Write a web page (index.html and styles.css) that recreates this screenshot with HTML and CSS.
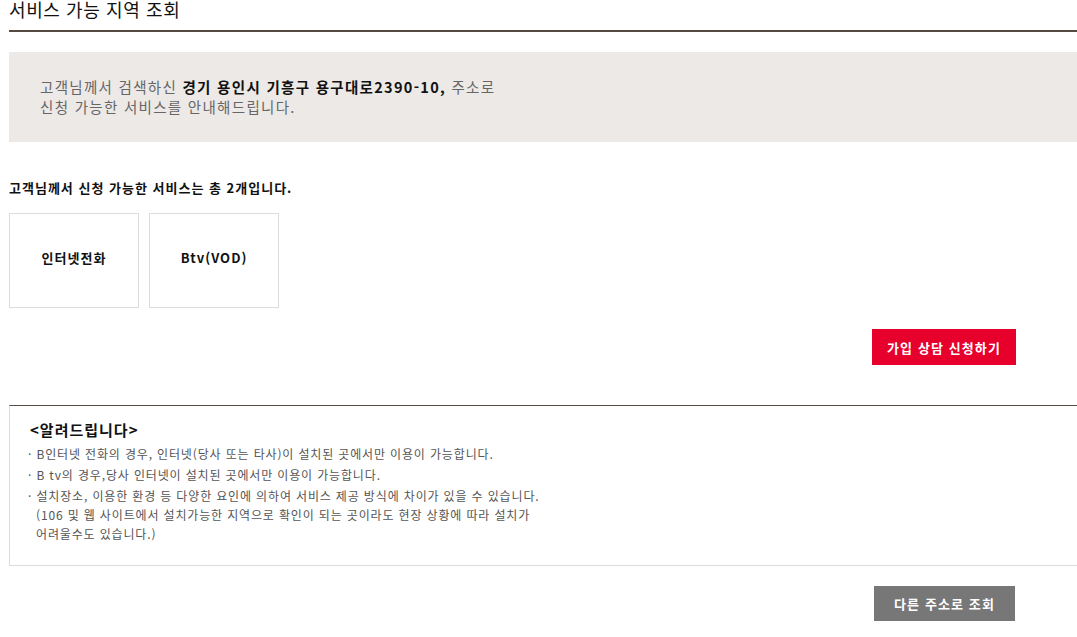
FILE: index.html
```html
<!DOCTYPE html>
<html lang="ko">

<head>
    <meta charset="UTF-8">
    <meta name="viewport" content="width=device-width, initial-scale=1.0">
    <title>서비스 가능 지역 조회</title>
    <link rel="stylesheet" href="styles.css">
</head>

<body>
    <div class="page">
        <h2 class="page-title">서비스 가능 지역 조회</h2>

        <div class="result-box">
            <p>고객님께서 검색하신 <strong>경기 용인시 기흥구 용구대로2390-10,</strong> 주소로<br>
                신청 가능한 서비스를 안내해드립니다.</p>
        </div>

        <div class="sub-title">고객님께서 신청 가능한 서비스는 총 2개입니다.</div>

        <div class="service-list">
            <div class="service-card">인터넷전화</div>
            <div class="service-card">Btv(VOD)</div>
        </div>

        <div class="btn-row">
            <button class="btn btn-red">가입 상담 신청하기</button>
        </div>

        <div class="notice">
            <div class="notice-title">&lt;알려드립니다&gt;</div>
            <ul class="notice-list">
                <li>· B인터넷 전화의 경우, 인터넷(당사 또는 타사)이 설치된 곳에서만 이용이 가능합니다.</li>
                <li>· B tv의 경우,당사 인터넷이 설치된 곳에서만 이용이 가능합니다.</li>
                <li>· 설치장소, 이용한 환경 등 다양한 요인에 의하여 서비스 제공 방식에 차이가 있을 수 있습니다.<br>
                    (106 및 웹 사이트에서 설치가능한 지역으로 확인이 되는 곳이라도 현장 상황에 따라 설치가<br>
                    어려울수도 있습니다.)</li>
            </ul>
        </div>

        <div class="btn-row btn-row-bottom">
            <button class="btn btn-gray">다른 주소로 조회</button>
        </div>
    </div>
</body>

</html>
```

FILE: styles.css
```css
html,
body {
    margin: 0;
    padding: 0;
    overflow: hidden;
}

body {
    font-family: "Noto Sans CJK KR", "Noto Sans", sans-serif;
    background-color: #ffffff;
    color: #222;
}

.page {
    width: 1080px;
    margin-left: 9px;
}

.page-title {
    margin: 0;
    padding-bottom: 12px;
    font-size: 18px;
    line-height: 18px;
    font-weight: 400;
    letter-spacing: 0.6px;
    color: #111;
    border-bottom: 2px solid #544a42;
}

.result-box {
    margin-top: 20px;
    background-color: #ede9e6;
    padding: 25px 31px;
}

.result-box p {
    margin: 0;
    font-size: 14.5px;
    line-height: 20px;
    letter-spacing: 1.3px;
    color: #666;
}

.result-box strong {
    color: #111;
}

.sub-title {
    margin-top: 37px;
    font-size: 13px;
    line-height: 18px;
    font-weight: 700;
    letter-spacing: 1px;
    color: #111;
}

.service-list {
    display: flex;
    gap: 10px;
    margin-top: 16px;
}

.service-card {
    box-sizing: border-box;
    width: 130px;
    height: 95px;
    padding-bottom: 6px;
    border: 1px solid #dcdcdc;
    display: flex;
    justify-content: center;
    align-items: center;
    font-size: 13px;
    font-weight: 700;
    letter-spacing: 1px;
    color: #111;
}

.btn-row {
    display: flex;
    justify-content: flex-end;
    padding-right: 73px;
    margin-top: 21px;
}

.btn-row-bottom {
    margin-top: 20px;
}

.btn {
    border: none;
    font-family: inherit;
    font-size: 13px;
    font-weight: 700;
    letter-spacing: 1.1px;
    color: #fff;
    cursor: pointer;
}

.btn-red {
    width: 144px;
    height: 36px;
    background-color: #e8002d;
}

.btn-gray {
    width: 141px;
    height: 35px;
    background-color: #777777;
    margin-right: 1px;
}

.notice {
    margin-top: 40px;
    border-top: 1px solid #544a42;
    border-left: 1px solid #dcdcdc;
    border-bottom: 1px solid #dcdcdc;
    padding: 14px 0 22px 18px;
}

.notice-title {
    padding-left: 2px;
    font-size: 15px;
    line-height: 20px;
    font-weight: 700;
    letter-spacing: 1px;
    color: #111;
    margin-bottom: 4px;
}

.notice-list {
    list-style: none;
    margin: 0;
    padding: 0;
}

.notice-list li {
    font-size: 12px;
    line-height: 19px;
    letter-spacing: 0.85px;
    color: #555;
    padding-left: 8px;
    text-indent: -8px;
    margin-top: 2px;
}

.notice-list li:first-child {
    margin-top: 0;
}
```
